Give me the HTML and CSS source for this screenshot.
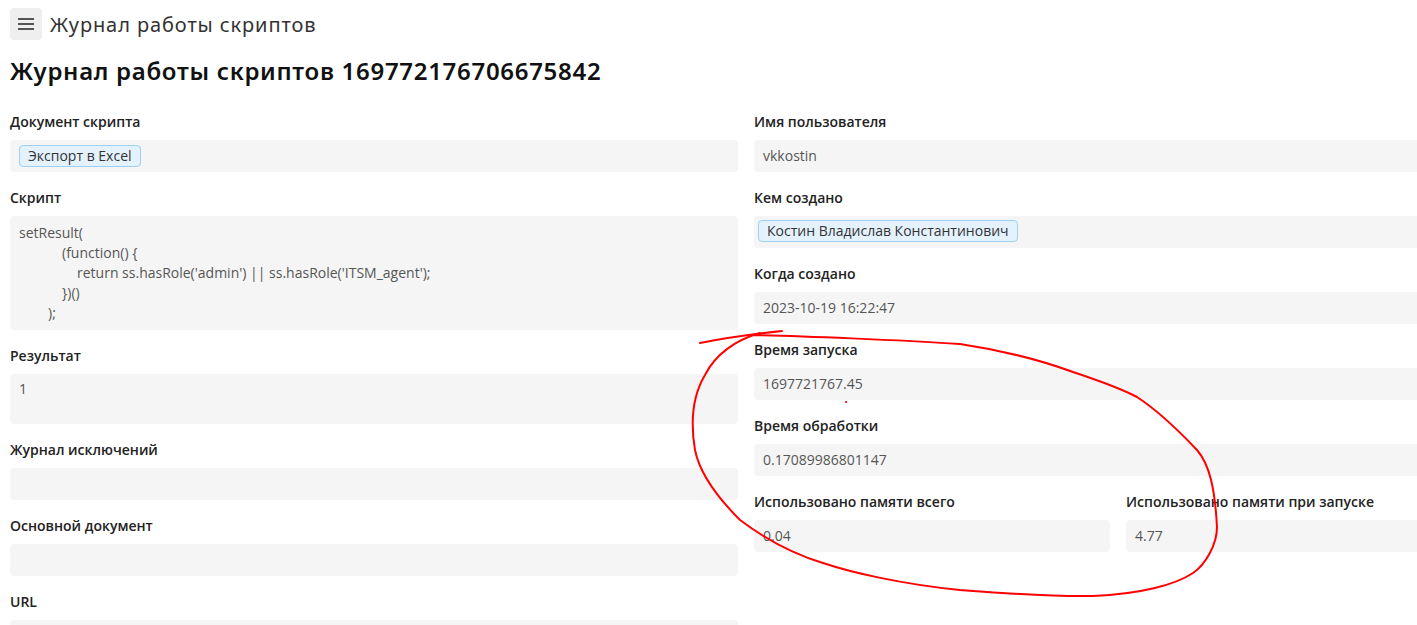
FILE: index.html
```html
<!DOCTYPE html>
<html lang="ru">
<head>
  <meta charset="UTF-8" />
  <meta name="viewport" content="width=device-width, initial-scale=1.0"/>
  <link rel="stylesheet" href="styles.css">
  <title>Журнал работы скриптов</title>
</head>
<body>
  <div class="page">
    <header class="topbar">
      <button class="menu-btn" type="button" aria-label="Меню">
        <svg width="16" height="12" viewBox="0 0 16 12">
          <rect x="0" y="0" width="16" height="2" fill="#555"/>
          <rect x="0" y="5" width="16" height="2" fill="#555"/>
          <rect x="0" y="10" width="16" height="2" fill="#555"/>
        </svg>
      </button>
      <div class="topbar-title">Журнал работы скриптов</div>
    </header>

    <h1 class="page-title">Журнал работы скриптов 169772176706675842</h1>

    <div class="record">
      <!-- левая колонка -->
      <div class="record-col">
        <div class="field">
          <div class="field-label">Документ скрипта</div>
          <div class="field-value chips"><span class="chip">Экспорт в Excel</span></div>
        </div>
        <div class="field">
          <div class="field-label">Скрипт</div>
          <div class="field-value code">
            <div>setResult(</div>
            <div class="ind-2">(function() {</div>
            <div class="ind-3">return ss.hasRole('admin') || ss.hasRole('ITSM_agent');</div>
            <div class="ind-2">})()</div>
            <div class="ind-1">);</div>
          </div>
        </div>
        <div class="field">
          <div class="field-label">Результат</div>
          <div class="field-value tall">1</div>
        </div>
        <div class="field">
          <div class="field-label">Журнал исключений</div>
          <div class="field-value"></div>
        </div>
        <div class="field">
          <div class="field-label">Основной документ</div>
          <div class="field-value"></div>
        </div>
        <div class="field">
          <div class="field-label">URL</div>
          <div class="field-value"></div>
        </div>
      </div>

      <!-- правая колонка -->
      <div class="record-col">
        <div class="field">
          <div class="field-label">Имя пользователя</div>
          <div class="field-value">vkkostin</div>
        </div>
        <div class="field">
          <div class="field-label">Кем создано</div>
          <div class="field-value chips right"><span class="chip">Костин Владислав Константинович</span></div>
        </div>
        <div class="field">
          <div class="field-label">Когда создано</div>
          <div class="field-value">2023-10-19 16:22:47</div>
        </div>
        <div class="field">
          <div class="field-label">Время запуска</div>
          <div class="field-value">1697721767.45</div>
        </div>
        <div class="field">
          <div class="field-label">Время обработки</div>
          <div class="field-value">0.17089986801147</div>
        </div>
        <div class="field-row">
          <div class="field">
            <div class="field-label">Использовано памяти всего</div>
            <div class="field-value">0.04</div>
          </div>
          <div class="field">
            <div class="field-label">Использовано памяти при запуске</div>
            <div class="field-value">4.77</div>
          </div>
        </div>
      </div>
    </div>
  </div>

  <!-- пометка от руки поверх скриншота -->
  <svg class="scribble" width="1417" height="625" viewBox="0 0 1417 625">
    <g fill="none" stroke="#ff0000" stroke-width="2" stroke-linecap="round" stroke-linejoin="round">
      <path d="M700,343 Q735,336 782,331"/>
      <path d="M753,335 C800,336 900,340 960,344 C1000,350 1040,360 1073,372 C1100,381 1120,388 1137,397 C1160,412 1180,432 1197,450 C1210,465 1215,490 1217,527 C1217,545 1205,565 1193,573 C1175,585 1140,594 1093,596 C1050,597 1000,593 960,590 C900,584 850,572 823,563 C790,553 760,535 740,520 C720,500 700,475 695,450 C690,420 693,395 705,375 C715,355 735,340 760,333"/>
      <circle cx="846" cy="402" r="0.6" fill="#ff0000" stroke-width="1"/>
    </g>
  </svg>
</body>
</html>
```

FILE: styles.css
```css
* {
  box-sizing: border-box;
}

html, body {
  margin: 0;
  padding: 0;
  height: 100%;
  overflow: hidden;
  background: #ffffff;
  font-family: 'Open Sans', sans-serif;
  color: #222;
}

:root {
  --box-bg: #f5f5f5;
  --value-color: #555;
  --chip-bg: #e4f2fe;
  --chip-border: #9ecff5;
}

.page {
  padding: 8px 10px;
}

.topbar {
  display: flex;
  align-items: center;
  gap: 8px;
  height: 32px;
}

.menu-btn {
  width: 32px;
  height: 32px;
  border: none;
  border-radius: 4px;
  background: #efefef;
  display: flex;
  align-items: center;
  justify-content: center;
  padding: 0;
}

.topbar-title {
  font-family: 'Noto Sans', sans-serif;
  font-size: 20px;
  color: #333;
  letter-spacing: 0.9px;
}

.page-title {
  font-family: 'Noto Sans', sans-serif;
  font-size: 24px;
  font-weight: 600;
  line-height: 30px;
  letter-spacing: 0.7px;
  margin: 16px 0 0;
  color: #111;
}

.record {
  display: grid;
  grid-template-columns: 728px 728px;
  column-gap: 16px;
  margin-top: 10px;
}

.record-col {
  display: flex;
  flex-direction: column;
}

.field {
  padding-top: 16px;
}

.field-label {
  font-size: 14px;
  font-weight: 600;
  line-height: 20px;
  margin-bottom: 8px;
  color: #222;
}

.field-value {
  background: var(--box-bg);
  border-radius: 4px;
  min-height: 32px;
  padding: 6px 8px 6px 9px;
  font-size: 14px;
  line-height: 20px;
  color: var(--value-color);
}

.field-value.tall {
  min-height: 50px;
  padding-top: 5px;
}

.field-value.chips {
  padding: 5px 9px;
}

.field-value.chips.right {
  padding-left: 4px;
  padding-top: 4px;
}

.chip {
  display: inline-block;
  background: var(--chip-bg);
  border: 1px solid var(--chip-border);
  border-radius: 4px;
  padding: 0 8px;
  line-height: 20px;
  font-size: 14px;
  color: #333;
}

.code {
  padding: 7px 9px;
  line-height: 20px;
}

.ind-1 {
  padding-left: 29px;
}

.ind-2 {
  padding-left: 43px;
}

.ind-3 {
  padding-left: 58px;
}

.field-row {
  display: grid;
  grid-template-columns: 1fr 1fr;
  column-gap: 16px;
}

.scribble {
  position: absolute;
  left: 0;
  top: 0;
  pointer-events: none;
}
```
